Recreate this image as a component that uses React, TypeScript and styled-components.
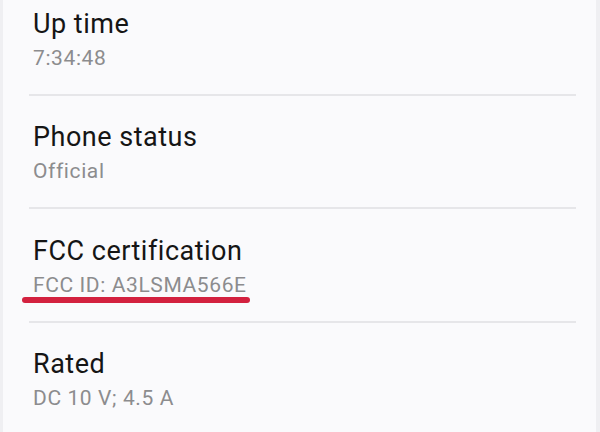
import React from "react";
import styled, { createGlobalStyle } from "styled-components";

const Global = createGlobalStyle`
  html, body { margin: 0; padding: 0; background: #fafafc; }
  body { font-family: Roboto, "Noto Sans", sans-serif; overflow: hidden; }
`;

const Screen = styled.div`
  width: 600px;
  height: 432px;
  box-sizing: border-box;
  background: #fafafc;
  border-left: 3px solid #efeff2;
  border-right: 4px solid #efeff2;
  overflow: hidden;
`;

const List = styled.ul`
  list-style: none;
  margin: -18px 20px 0 26px;
  padding: 0;
`;

const Item = styled.li`
  padding: 25.5px 0 23px 4px;
  border-bottom: 2px solid #e6e6e9;
  &:last-child { border-bottom: none; }
`;

const Title = styled.div`
  font-size: 27px;
  line-height: 32px;
  color: #151515;
  letter-spacing: 0.5px;
`;

const Sub = styled.div`
  margin-top: 5px;
  font-size: 21px;
  line-height: 26px;
  color: #8c8c8e;
  letter-spacing: 0.6px;
`;

const Marked = styled.span`
  position: relative;
  &::after {
    content: "";
    position: absolute;
    left: -11px;
    right: -3px;
    bottom: -6px;
    height: 6px;
    border-radius: 3px;
    background: #d3213f;
  }
`;

const rows = [
  { title: "Up time", value: "7:34:48" },
  { title: "Phone status", value: "Official" },
  { title: "FCC certification", value: "FCC ID: A3LSMA566E", marked: true },
  { title: "Rated", value: "DC 10 V; 4.5 A" },
];

export default function App() {
  return (
    <>
      <Global />
      <Screen>
        <List>
          {rows.map((r) => (
            <Item key={r.title}>
              <Title>{r.title}</Title>
              <Sub>{r.marked ? <Marked>{r.value}</Marked> : r.value}</Sub>
            </Item>
          ))}
        </List>
      </Screen>
    </>
  );
}
